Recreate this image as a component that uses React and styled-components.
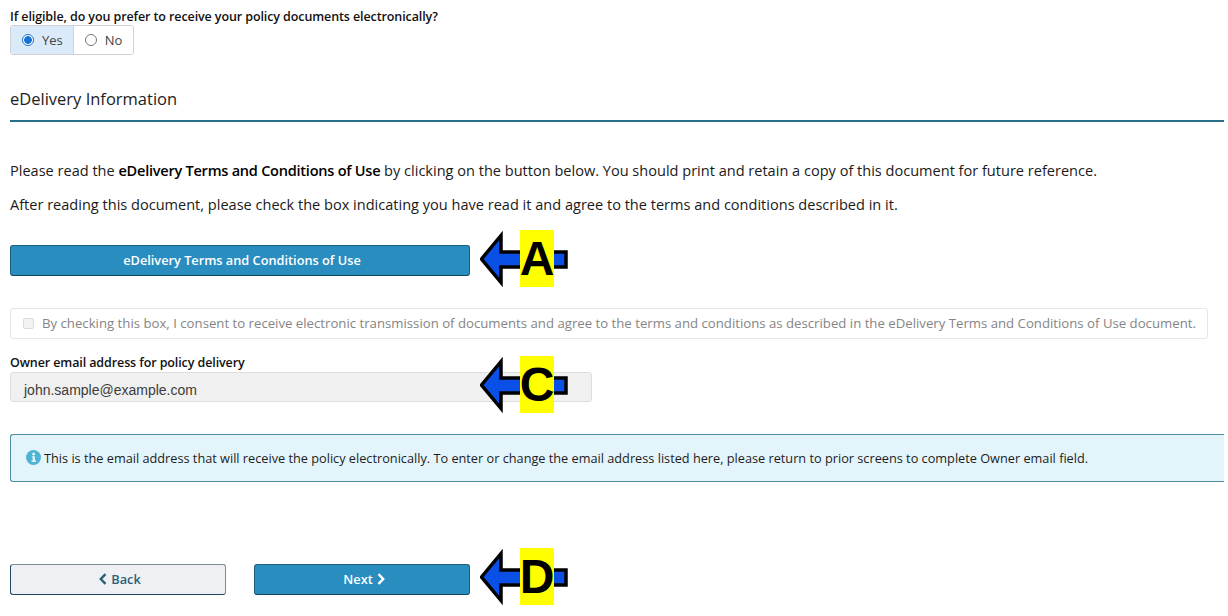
import React from "react";
import styled, { createGlobalStyle } from "styled-components";

const GlobalStyle = createGlobalStyle`
  html, body {
    margin: 0;
    padding: 0;
    background: #fff;
  }
  body {
    font-family: "Open Sans", "Liberation Sans", sans-serif;
    color: #1a1a1a;
    overflow: hidden;
  }
`;

const Page = styled.div`
  width: 1228px;
  height: 616px;
  box-sizing: border-box;
  padding: 8px 4px 0 10px;
  display: flex;
  flex-direction: column;
  align-items: flex-start;
`;

const FieldLabel = styled.div`
  font-size: 12.5px;
  font-weight: 600;
  line-height: 17px;
  color: #111;
  letter-spacing: -0.1px;
`;

const ToggleGroup = styled.div`
  display: flex;
  height: 30px;
  box-sizing: border-box;
  border: 1px solid #ccd2d6;
  border-radius: 3px;
  overflow: hidden;
`;

const ToggleOption = styled.label`
  display: flex;
  align-items: center;
  gap: 8px;
  padding: 0 ${p => (p.$selected ? "10px" : "11px")} 0 11px;
  font-size: 13px;
  color: #444;
  background: ${p => (p.$selected ? "#dbeaf8" : "#fff")};
  border-right: ${p => (p.$selected ? "1px solid #ccd2d6" : "none")};
`;

const RadioMark = styled.span`
  width: 12px;
  height: 12px;
  box-sizing: border-box;
  border-radius: 50%;
  border: 1px solid ${p => (p.$on ? "#1a73d0" : "#777")};
  background: ${p => (p.$on ? "radial-gradient(circle, #1a73d0 0 3.6px, #fff 4px)" : "#fff")};
`;

const SectionHeading = styled.h2`
  align-self: stretch;
  margin: 32px 0 0;
  padding-bottom: 9px;
  border-bottom: 2px solid #2a6f8a;
  font-size: 16.5px;
  line-height: 24px;
  font-weight: 400;
  color: #222;
`;

const Para = styled.p`
  margin: ${p => p.$top} 0 0;
  font-size: 14.55px;
  line-height: 20px;
  color: #1a1a1a;
  white-space: nowrap;
  & > b {
    font-weight: 600;
    letter-spacing: -0.25px;
    color: #000;
  }
`;

const PrimaryButton = styled.div`
  width: ${p => p.$width};
  height: 31px;
  margin-top: ${p => p.$top || "0"};
  box-sizing: border-box;
  display: flex;
  align-items: center;
  justify-content: center;
  gap: 4px;
  padding: 0 0 2px 4px;
  background: #2a8dc0;
  border: 1px solid #1c5f80;
  border-bottom-color: #10465f;
  border-radius: 3px;
  color: #fff;
  font-size: 12.75px;
  font-weight: 600;
`;

const ConsentBox = styled.div`
  width: 1198px;
  height: 31px;
  margin-top: 32px;
  box-sizing: border-box;
  display: flex;
  align-items: center;
  gap: 8px;
  padding: 0 0 1px 12px;
  border: 1px solid #e6e6e6;
  border-radius: 3px;
  font-size: 13.2px;
  color: #858585;
  white-space: nowrap;
`;

const CheckMark = styled.span`
  width: 11px;
  height: 11px;
  box-sizing: border-box;
  background: #f3f3f3;
  border: 1px solid #dcdcdc;
  border-radius: 2px;
`;

const EmailLabel = styled(FieldLabel)`
  margin-top: 15px;
`;

const ReadonlyInput = styled.div`
  width: 582px;
  height: 30px;
  margin-top: 1px;
  box-sizing: border-box;
  display: flex;
  align-items: center;
  padding: 6px 0 0 13px;
  background: #f0f0f0;
  border: 1px solid #dedede;
  border-radius: 3px;
  font-family: "Liberation Sans", Arial, sans-serif;
  font-size: 14px;
  color: #3c3c3c;
`;

const Alert = styled.div`
  align-self: stretch;
  height: 48px;
  margin-top: 32px;
  box-sizing: border-box;
  display: flex;
  align-items: center;
  gap: 3px;
  padding: 0 0 1px 15px;
  background: #e3f4fb;
  border: 1px solid #4f8fa3;
  border-right: none;
  border-radius: 3px 0 0 3px;
  font-size: 12.72px;
  color: #1d1d1d;
  white-space: nowrap;
`;

const ButtonRow = styled.div`
  display: flex;
  gap: 28px;
  margin-top: 82px;
`;

const BackButton = styled.div`
  width: 216px;
  height: 31px;
  box-sizing: border-box;
  display: flex;
  align-items: center;
  justify-content: center;
  gap: 4px;
  padding: 0 0 2px 4px;
  background: #eef0f3;
  border: 1px solid #7d8b92;
  border-bottom-color: #1e4a60;
  border-left-color: #1e4a60;
  border-radius: 3px;
  color: #2c5f78;
  font-size: 12.75px;
  font-weight: 600;
`;

const Callout = styled.div`
  position: absolute;
  left: 480px;
  top: ${p => p.$top}px;
  width: 90px;
  height: 58px;
`;

const CalloutLetter = styled.span`
  position: absolute;
  left: 40px;
  top: 0;
  width: 34px;
  height: 57px;
  display: flex;
  align-items: center;
  justify-content: center;
  background: #ffff00;
  color: #000;
  font-family: "Liberation Sans", Arial, sans-serif;
  font-size: 48px;
  font-weight: 700;
  line-height: 1;
`;

const ArrowSvg = styled.svg`
  position: absolute;
  left: 0;
  top: 0;
`;

const Chevron = ({ dir, color }) => (
  <svg width="8" height="12" viewBox="0 0 8 12">
    <path
      d={dir === "left" ? "M6.5 1.2 L1.8 6 L6.5 10.8" : "M1.5 1.2 L6.2 6 L1.5 10.8"}
      fill="none"
      stroke={color}
      strokeWidth="2.4"
    />
  </svg>
);

const InfoIcon = () => (
  <svg width="15" height="15" viewBox="0 0 15 15">
    <circle cx="7.5" cy="7.5" r="7.5" fill="#4fb3d4" />
    <circle cx="7.6" cy="3.9" r="1.5" fill="#e3f4fb" />
    <path d="M5.8 6.2 H8.9 V10.6 H10 V12 H5.6 V10.6 H6.7 V7.6 H5.8 Z" fill="#e3f4fb" />
  </svg>
);

const Arrow = () => (
  <ArrowSvg width="90" height="58" viewBox="0 0 90 58">
    <path
      d="M1.5 29 L21 5.5 V22 H86 V37 H21 V52.5 Z"
      fill="#0a50e6"
      stroke="#000"
      strokeWidth="3.5"
      strokeLinejoin="miter"
    />
  </ArrowSvg>
);

const MarkerArrow = ({ top, letter }) => (
  <Callout $top={top}>
    <Arrow />
    <CalloutLetter>{letter}</CalloutLetter>
  </Callout>
);

export default function App() {
  return (
    <>
      <GlobalStyle />
      <Page>
        <FieldLabel>If eligible, do you prefer to receive your policy documents electronically?</FieldLabel>
        <ToggleGroup>
          <ToggleOption $selected>
            <RadioMark $on />
            Yes
          </ToggleOption>
          <ToggleOption>
            <RadioMark />
            No
          </ToggleOption>
        </ToggleGroup>

        <SectionHeading>eDelivery Information</SectionHeading>

        <Para $top="38px">
          Please read the <b>eDelivery Terms and Conditions of Use</b> by clicking on the button below. You should print and retain a copy of this document for future reference.
        </Para>
        <Para $top="14px">
          After reading this document, please check the box indicating you have read it and agree to the terms and conditions described in it.
        </Para>

        <PrimaryButton $width="460px" $top="31px">eDelivery Terms and Conditions of Use</PrimaryButton>

        <ConsentBox>
          <CheckMark />
          By checking this box, I consent to receive electronic transmission of documents and agree to the terms and conditions as described in the eDelivery Terms and Conditions of Use document.
        </ConsentBox>

        <EmailLabel>Owner email address for policy delivery</EmailLabel>
        <ReadonlyInput>john.sample@example.com</ReadonlyInput>

        <Alert>
          <InfoIcon />
          This is the email address that will receive the policy electronically. To enter or change the email address listed here, please return to prior screens to complete Owner email field.
        </Alert>

        <ButtonRow>
          <BackButton>
            <Chevron dir="left" color="#2c5f78" />
            Back
          </BackButton>
          <PrimaryButton $width="216px">
            Next
            <Chevron dir="right" color="#fff" />
          </PrimaryButton>
        </ButtonRow>
      </Page>

      <MarkerArrow top={230} letter="A" />
      <MarkerArrow top={356} letter="C" />
      <MarkerArrow top={548} letter="D" />
    </>
  );
}
